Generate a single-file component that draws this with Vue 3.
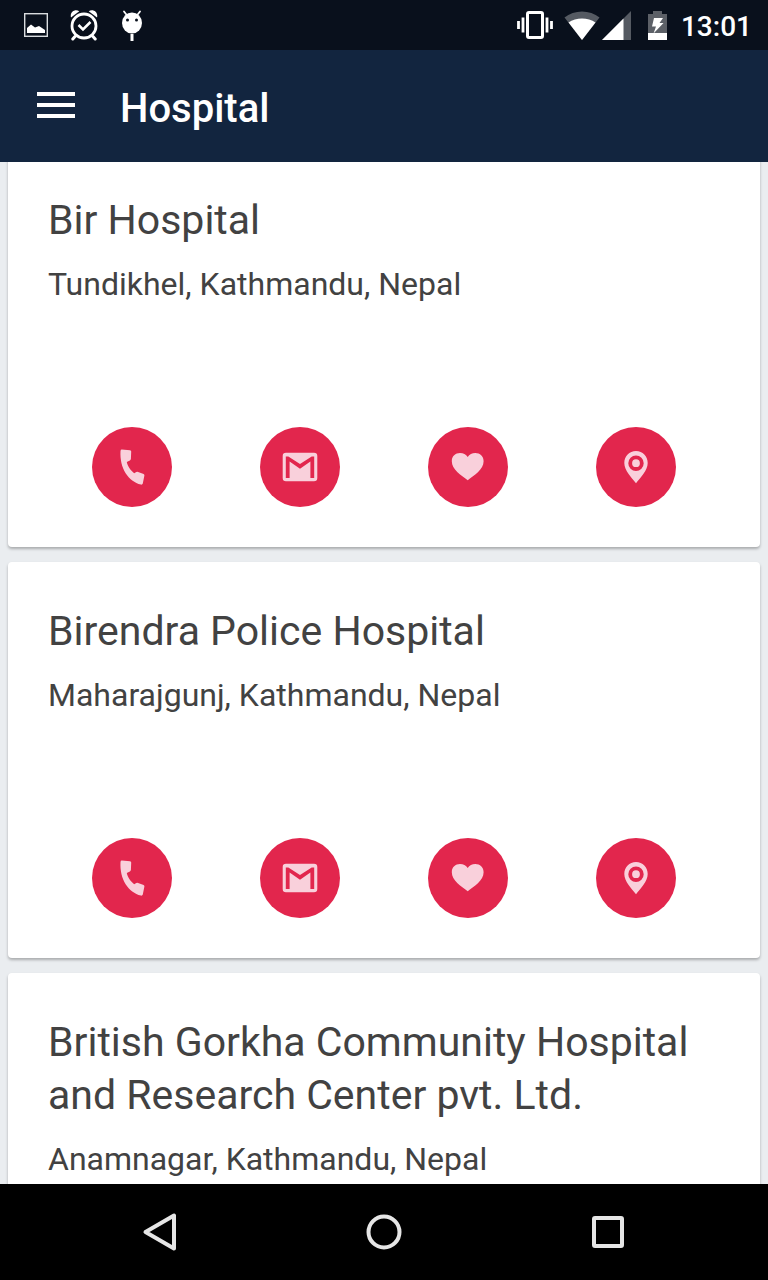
<script setup>
const hospitals = [
  { name: 'Bir Hospital', address: 'Tundikhel, Kathmandu, Nepal' },
  { name: 'Birendra Police Hospital', address: 'Maharajgunj, Kathmandu, Nepal' },
  { name: 'British Gorkha Community Hospital and Research Center pvt. Ltd.', address: 'Anamnagar, Kathmandu, Nepal' },
]

const actions = [
  {
    label: 'Call',
    path: 'M29.800 22.600 L38 23.200 Q39.300 23.400 39.200 24.600 L38.900 32 Q38.700 33 37.900 33.400 L34.800 35 C35.500 39 38.500 43.500 42.200 46.200 L44.300 45 Q45.200 44.600 46.100 45 L51.600 47 Q52.600 47.500 52.400 48.600 L50.800 56.500 Q50.300 57.900 49 57.600 C36.500 54.500 27.500 41.500 28.500 24 Q28.600 22.600 29.800 22.600 Z',
  },
  {
    label: 'Email',
    path: 'M26 25.700H54A3.300 3.300 0 0 1 57.300 29V51A3.300 3.300 0 0 1 54 54.300H26A3.300 3.300 0 0 1 22.700 51V29A3.300 3.300 0 0 1 26 25.700ZM25.800 29.500V51H29.600V34.500L40 41.700L50.400 34.500V51H54.200V29.500H51.700L40 37L28.300 29.500Z',
  },
  {
    label: 'Favourite',
    path: 'M39.700 53.300 C33 48 23.800 42.500 23.800 34.200 C23.800 29 27.500 26 32 26 C35.300 26 38 27.500 39.700 30 C41.400 27.500 44 26 47.300 26 C52 26 55.600 29.300 55.600 34.200 C55.600 42.500 46.400 48 39.700 53.300 Z',
  },
  {
    label: 'Show on map',
    path: 'M40 24C33.300 24 28.300 29.200 28.300 36C28.300 43.500 35.500 50.500 40 56.300C44.500 50.500 51.700 43.500 51.700 36C51.700 29.200 46.700 24 40 24ZM40 28.500A7.700 7.700 0 1 1 40 43.900A7.700 7.700 0 1 1 40 28.500ZM40 32.300A3.900 3.900 0 1 0 40 40.100A3.900 3.900 0 1 0 40 32.300Z',
  },
]
</script>

<template>
  <div class="screen">
    <div class="status">
      <div class="status-group notifications">
        <svg width="24" height="24" viewBox="0 0 24 24" aria-hidden="true">
          <rect x="0.700" y="0.700" width="22.600" height="22.600" fill="none" stroke="#d9dcdf" stroke-width="1.400" />
          <path d="M3 20V15L7 11.500L11 14.500L15 13L21 17V20Z" fill="#fff" />
        </svg>
        <svg width="28" height="32" viewBox="1 0 28 32" aria-hidden="true">
          <circle cx="15" cy="17" r="12" fill="none" stroke="#fff" stroke-width="2.800" />
          <path d="M6 27.500L3.800 30M24 27.500L26.200 30" fill="none" stroke="#fff" stroke-width="3" stroke-linecap="round" />
          <path d="M9.500 16L14 20.500L21.500 13" fill="none" stroke="#fff" stroke-width="2.500" />
          <path d="M2 8.500C0.500 3 6 -0.500 10.300 2.200ZM28 8.500C29.500 3 24 -0.500 19.700 2.200Z" fill="#fff" />
        </svg>
        <svg width="24" height="32" viewBox="-1 0 24 32" aria-hidden="true">
          <path d="M3 2.500L6.500 7M19 2.500L15.500 7" stroke="#fff" stroke-width="1.800" stroke-linecap="round" />
          <ellipse cx="11" cy="14" rx="10" ry="10.500" fill="#fff" />
          <path d="M11 25V32" stroke="#fff" stroke-width="3" />
          <circle cx="6.500" cy="11" r="1.500" fill="#09101c" />
          <circle cx="15.500" cy="11" r="1.500" fill="#09101c" />
        </svg>
      </div>
      <div class="status-group system">
        <svg class="vibrate" width="36" height="28" viewBox="0 0 36 28" aria-hidden="true">
          <rect x="10.500" y="1.500" width="15" height="25" rx="1.500" fill="none" stroke="#fff" stroke-width="3" />
          <path d="M1.500 10V18M6 6.500V21.500M30 6.500V21.500M34.500 10V18" stroke="#fff" stroke-width="2.800" />
        </svg>
        <svg class="wifi" width="36" height="29" viewBox="0 0 36 29" aria-hidden="true">
          <path d="M18 29L0.500 6.500C10 -1.500 26 -1.500 35.500 6.500Z" fill="#555a62" />
          <path d="M18 29L4.500 11.500C12 6 24 6 31.500 11.500Z" fill="#fff" />
        </svg>
        <svg class="signal" width="29" height="29" viewBox="0 0 29 29" aria-hidden="true">
          <path d="M0 29L29 0V29Z" fill="#555a62" />
          <path d="M0 29L21.500 7.500V29Z" fill="#fff" />
        </svg>
        <svg class="battery" width="19" height="29" viewBox="0 0 19 29" aria-hidden="true">
          <path d="M0 3H5V0H14V3H19V29H0Z" fill="#5c6067" />
          <path d="M0 22H19V29H0Z" fill="#fff" />
          <path d="M6 7H15L11.500 12H15.500L5.500 22.500L8 15.500H4Z" fill="#fff" />
        </svg>
        <time>13:01</time>
      </div>
    </div>

    <header class="appbar">
      <button class="menu" type="button" aria-label="Open menu">
        <svg width="38" height="28" viewBox="0 0 38 28" aria-hidden="true">
          <path d="M0 3H38M0 14H38M0 25H38" stroke="#fff" stroke-width="4" />
        </svg>
      </button>
      <h1>Hospital</h1>
    </header>

    <main class="list">
      <article v-for="hospital in hospitals" :key="hospital.name" class="card">
        <h2>{{ hospital.name }}</h2>
        <p>{{ hospital.address }}</p>
        <div class="actions">
          <button v-for="action in actions" :key="action.label" type="button" :aria-label="action.label">
            <svg width="80" height="80" viewBox="0 0 80 80" aria-hidden="true">
              <path :d="action.path" fill="#f9d0db" fill-rule="evenodd" />
            </svg>
          </button>
        </div>
      </article>
    </main>

    <nav class="navbar">
      <button type="button" aria-label="Back">
        <svg width="40" height="40" viewBox="0 0 40 40" aria-hidden="true">
          <path d="M5.500 20L34 3.500V36.500Z" />
        </svg>
      </button>
      <button type="button" aria-label="Home">
        <svg width="40" height="40" viewBox="0 0 40 40" aria-hidden="true">
          <circle cx="20" cy="20" r="15.500" />
        </svg>
      </button>
      <button type="button" aria-label="Recent apps">
        <svg width="40" height="40" viewBox="0 0 40 40" aria-hidden="true">
          <rect x="6" y="6" width="28" height="28" rx="1" />
        </svg>
      </button>
    </nav>
  </div>
</template>

<style>
body {
  margin: 0;
}
</style>

<style scoped>
.screen {
  display: flex;
  flex-direction: column;
  height: 100vh;
  overflow: hidden;
  background: #eaedf0;
  color: #424242;
  font-family: Roboto, "Liberation Sans", sans-serif;
}

button {
  padding: 0;
  border: 0;
  background: none;
  cursor: pointer;
}

svg {
  display: block;
}

.status {
  display: flex;
  flex: none;
  align-items: center;
  justify-content: space-between;
  height: 50px;
  padding: 0 16px 0 24px;
  background: #09101c;
  color: #fff;
}

.status-group {
  display: flex;
  align-items: center;
}

.notifications {
  gap: 22px;
}

.wifi {
  margin-left: 11px;
}

.signal {
  margin-left: 2px;
}

.battery {
  margin-left: 17px;
}

time {
  margin-left: 14px;
  padding-top: 4px;
  font-size: 28px;
  font-weight: 500;
  line-height: 32px;
}

.appbar {
  z-index: 1;
  display: flex;
  flex: none;
  align-items: center;
  gap: 45px;
  height: 112px;
  padding: 0 37px;
  background: #12253f;
  color: #fff;
}

.menu {
  margin-bottom: 2px;
}

h1 {
  margin: 6px 0 0;
  font-size: 40px;
  font-weight: 500;
  line-height: 48px;
}

.list {
  display: flex;
  flex: 1;
  flex-direction: column;
  gap: 15px;
  min-height: 0;
  margin-top: -11px;
  padding: 0 8px;
  overflow: hidden;
}

.card {
  flex: none;
  padding: 43px 40px 40px;
  border-radius: 4px;
  background: #fff;
  box-shadow: 0 2px 3px rgba(0, 0, 0, 0.28);
}

h2 {
  margin: 0;
  font-size: 41px;
  font-weight: 400;
  line-height: 53px;
}

p {
  margin: 17px 0 0;
  font-size: 32px;
  font-weight: 400;
  line-height: 40px;
}

.actions {
  display: grid;
  grid-template-columns: repeat(4, 1fr);
  justify-items: center;
  margin-top: 123px;
}

.actions button {
  border-radius: 50%;
  background: #e2264d;
}

.navbar {
  z-index: 1;
  display: flex;
  flex: none;
  align-items: center;
  justify-content: center;
  gap: 184px;
  height: 96px;
  background: #000;
}

.navbar svg {
  fill: none;
  stroke: #e6e6e6;
  stroke-width: 4;
  stroke-linejoin: round;
}
</style>
